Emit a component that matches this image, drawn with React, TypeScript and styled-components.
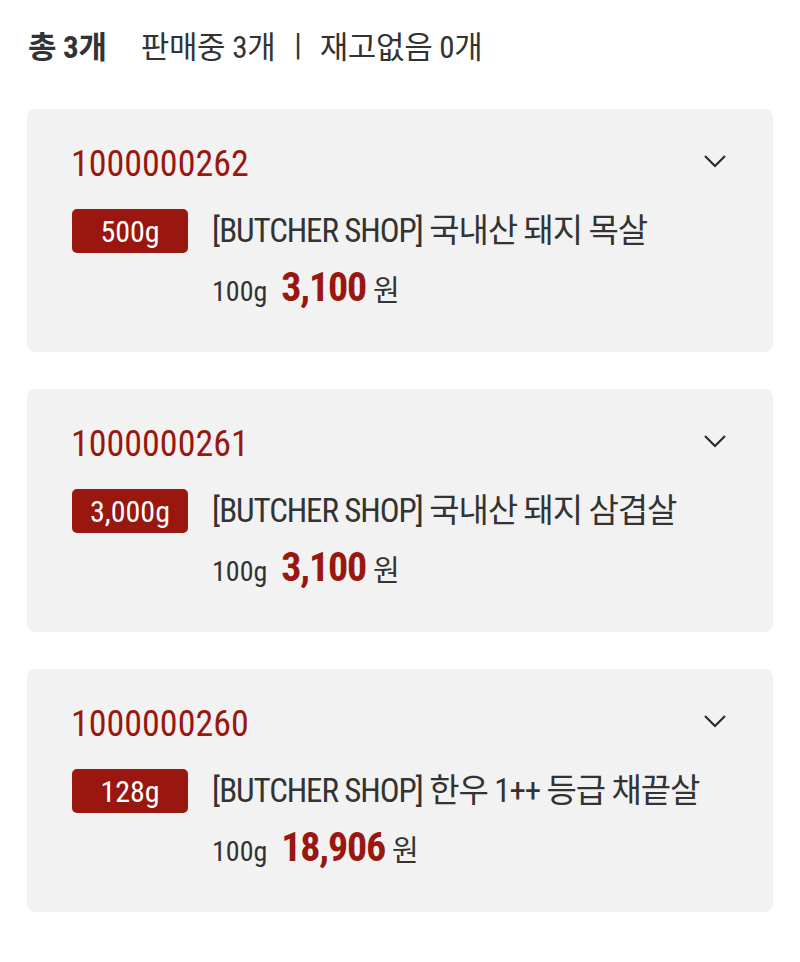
import React from "react";
import styled, { createGlobalStyle } from "styled-components";

const Global = createGlobalStyle`
  html, body { margin: 0; padding: 0; background: #ffffff; }
  body { font-family: "Roboto Condensed", "Noto Sans CJK KR", sans-serif; color: #333333; }
`;

const RED = "#99170f";
const INK = "#333333";

const Page = styled.div`
  width: 800px;
  padding: 20px 27px 40px 27px;
  box-sizing: border-box;
`;

const Summary = styled.div`
  display: flex;
  align-items: center;
  height: 48px;
  font-size: 31px;
  letter-spacing: -0.3px;
  color: ${INK};
`;

const Total = styled.span`
  font-weight: 700;
  margin-left: 1px;
  margin-right: 34px;
`;

const Sep = styled.span`
  margin: 0 18px 0 19px;
`;

const List = styled.div`
  display: flex;
  flex-direction: column;
  gap: 37px;
  margin-top: 41px;
`;

const Card = styled.div`
  background: #f2f2f2;
  border-radius: 8px;
  height: 243px;
  box-sizing: border-box;
  padding: 29px 44px 0 44px;
  display: flex;
  flex-direction: column;
`;

const CardHead = styled.div`
  display: flex;
  align-items: center;
  justify-content: space-between;
  height: 48px;
`;

const Code = styled.div`
  color: ${RED};
  font-size: 36px;
  margin-top: 4px;
`;

const Chevron = styled.svg`
  width: 24px;
  height: 16px;
  margin-right: 2px;
  margin-bottom: 2px;
`;

const Row = styled.div`
  display: flex;
  align-items: center;
  margin-top: 23px;
`;

const Badge = styled.div`
  width: 116px;
  height: 44px;
  border-radius: 5px;
  background: ${RED};
  color: #fff;
  font-size: 30px;
  display: flex;
  align-items: center;
  justify-content: center;
  margin-left: 1px;
  margin-right: 24px;
`;

const Title = styled.div`
  font-size: 33px;
  line-height: 40px;
  letter-spacing: -1.1px;
  color: ${INK};
  margin-top: -1px;
`;

const PriceRow = styled.div`
  display: flex;
  align-items: baseline;
  margin-top: 11px;
  padding-left: 141px;
`;

const Unit = styled.span`
  font-size: 28px;
  color: ${INK};
`;

const Price = styled.span`
  font-size: 40px;
  font-weight: 700;
  color: ${RED};
  letter-spacing: -1.2px;
  margin: 0 7px 0 14px;
`;

const Won = styled.span`
  font-size: 29px;
  color: ${INK};
`;

const items = [
  { code: "1000000262", badge: "500g", title: "[BUTCHER SHOP] 국내산 돼지 목살", price: "3,100" },
  { code: "1000000261", badge: "3,000g", title: "[BUTCHER SHOP] 국내산 돼지 삼겹살", price: "3,100" },
  { code: "1000000260", badge: "128g", title: "[BUTCHER SHOP] 한우 1++ 등급 채끝살", price: "18,906" },
];

export default function App() {
  return (
    <>
      <Global />
      <Page>
        <Summary>
          <Total>총 3개</Total>
          <span>판매중 3개</span>
          <Sep>|</Sep>
          <span>재고없음 0개</span>
        </Summary>
        <List>
          {items.map((it) => (
            <Card key={it.code}>
              <CardHead>
                <Code>{it.code}</Code>
                <Chevron viewBox="0 0 24 16" fill="none" stroke="#2b2b2b" strokeWidth="2.2">
                  <path d="M2 3 L12 13 L22 3" />
                </Chevron>
              </CardHead>
              <Row>
                <Badge>{it.badge}</Badge>
                <Title>{it.title}</Title>
              </Row>
              <PriceRow>
                <Unit>100g</Unit>
                <Price>{it.price}</Price>
                <Won>원</Won>
              </PriceRow>
            </Card>
          ))}
        </List>
      </Page>
    </>
  );
}
